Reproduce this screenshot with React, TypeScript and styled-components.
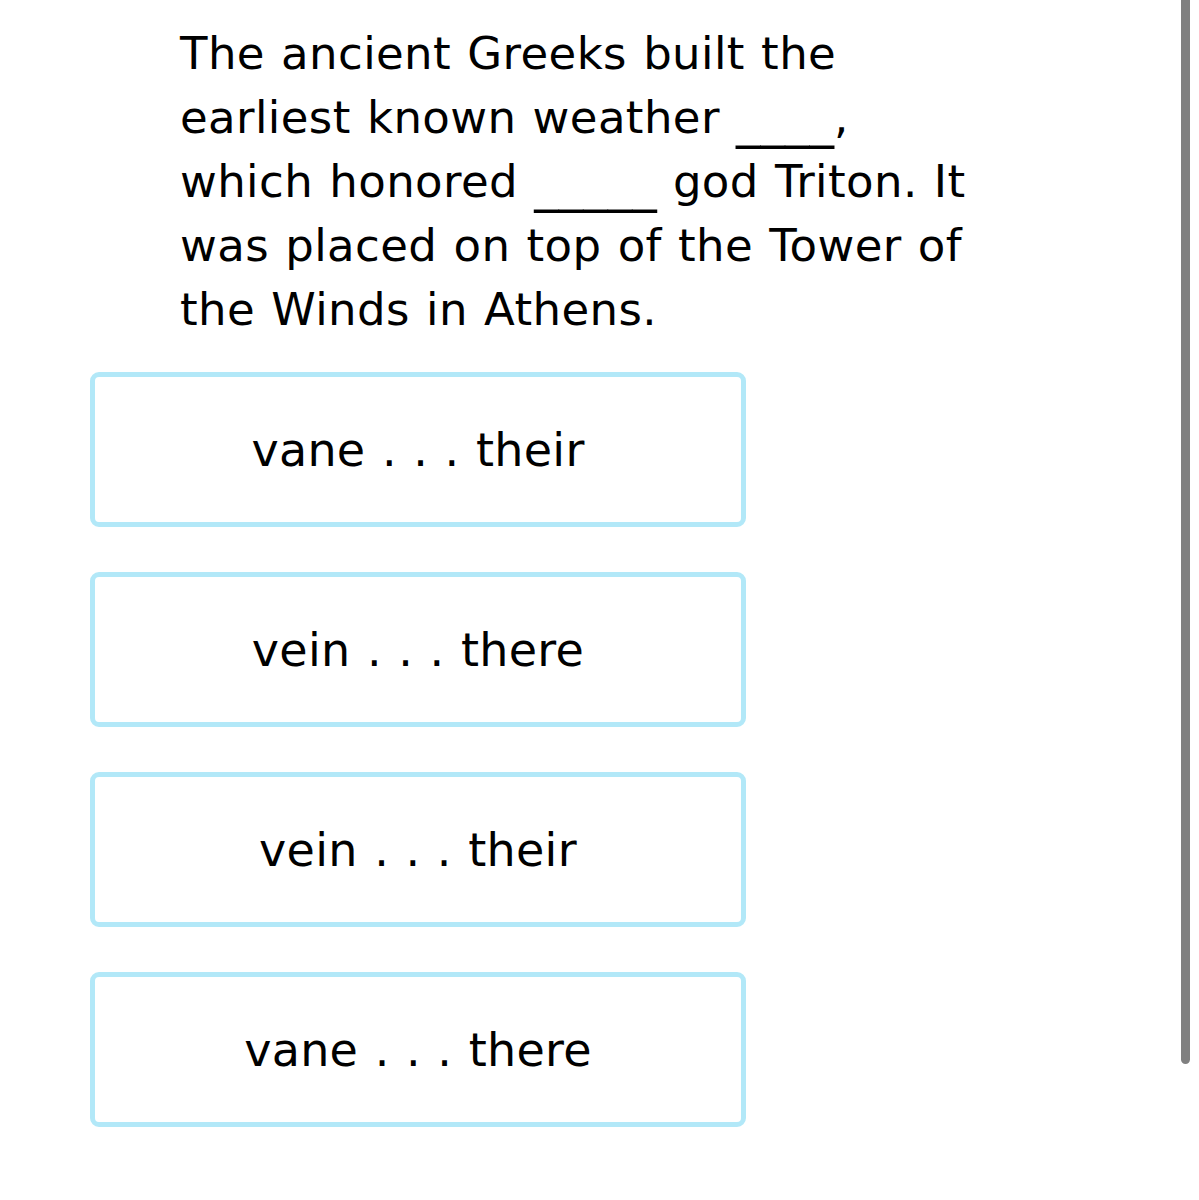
import styled, { createGlobalStyle } from "styled-components";

const GlobalStyle = createGlobalStyle`
    html, body {
        margin: 0;
        padding: 0;
        background: #ffffff;
    }
    body {
        font-family: "DejaVu Sans", Verdana, sans-serif;
        color: #000000;
    }
`;

const Page = styled.div`
    width: 100%;
    min-height: 1200px;
    padding: 22px 0 0 90px;
    box-sizing: border-box;
    display: flex;
    flex-direction: column;
    gap: 30px;
`;

const Passage = styled.p`
    margin: 0 0 0 90px;
    font-size: 45px;
    line-height: 64px;
    letter-spacing: 0.4px;
    word-spacing: 1.5px;
    color: #000000;
`;

// the blank to fill in: slightly bigger underscores sitting a bit lower
const Blank = styled.span`
    display: inline-block;
    font-size: 49px;
    line-height: 45px;
    letter-spacing: 0;
    vertical-align: -4px;
`;

const Choices = styled.div`
    display: flex;
    flex-direction: column;
    gap: 45px;
    width: 656px;
`;

const Choice = styled.button`
    height: 155px;
    width: 100%;
    box-sizing: border-box;
    border: 5px solid #b2e8f8;
    border-radius: 9px;
    background: #ffffff;
    display: flex;
    align-items: center;
    justify-content: center;
    font-family: "DejaVu Sans", Verdana, sans-serif;
    font-size: 46px;
    letter-spacing: 0.3px;
    word-spacing: 1.5px;
    color: #000000;
    padding: 0;
    cursor: pointer;
`;

const ScrollThumb = styled.div`
    position: fixed;
    top: 0;
    right: 9px;
    width: 9px;
    height: 1064px;
    background: #808080;
    border-radius: 0 0 5px 5px;
`;

const answers = [
    "vane . . . their",
    "vein . . . there",
    "vein . . . their",
    "vane . . . there",
];

const App = () => {
    return (
        <>
            <GlobalStyle />
            <Page>
                <Passage>
                    The ancient Greeks built the
                    <br />
                    earliest known weather <Blank>____</Blank>,
                    <br />
                    which honored <Blank>_____</Blank> god Triton. It
                    <br />
                    was placed on top of the Tower of
                    <br />
                    the Winds in Athens.
                </Passage>
                <Choices>
                    {answers.map((a) => (
                        <Choice key={a} type="button">{a}</Choice>
                    ))}
                </Choices>
            </Page>
            <ScrollThumb />
        </>
    );
};

export default App;
